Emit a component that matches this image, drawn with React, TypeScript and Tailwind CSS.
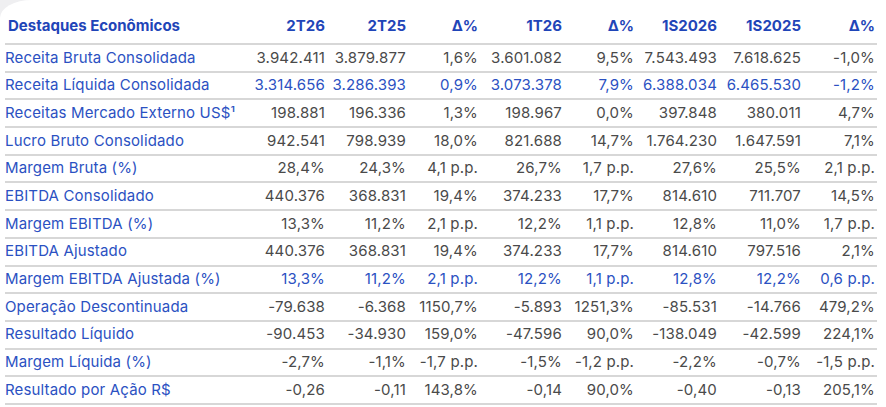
const cols = "grid grid-cols-[243px_79px_81px_72px_84px_72px_83px_84px_74px]";

const headers = ["2T26", "2T25", "Δ%", "1T26", "Δ%", "1S2026", "1S2025", "Δ%"];

type Row = { label: string; values: string[]; blue?: boolean };

const rows: Row[] = [
  { label: "Receita Bruta Consolidada", values: ["3.942.411", "3.879.877", "1,6%", "3.601.082", "9,5%", "7.543.493", "7.618.625", "-1,0%"] },
  { label: "Receita Líquida Consolidada", values: ["3.314.656", "3.286.393", "0,9%", "3.073.378", "7,9%", "6.388.034", "6.465.530", "-1,2%"], blue: true },
  { label: "Receitas Mercado Externo US$¹", values: ["198.881", "196.336", "1,3%", "198.967", "0,0%", "397.848", "380.011", "4,7%"] },
  { label: "Lucro Bruto Consolidado", values: ["942.541", "798.939", "18,0%", "821.688", "14,7%", "1.764.230", "1.647.591", "7,1%"] },
  { label: "Margem Bruta (%)", values: ["28,4%", "24,3%", "4,1 p.p.", "26,7%", "1,7 p.p.", "27,6%", "25,5%", "2,1 p.p."] },
  { label: "EBITDA Consolidado", values: ["440.376", "368.831", "19,4%", "374.233", "17,7%", "814.610", "711.707", "14,5%"] },
  { label: "Margem EBITDA (%)", values: ["13,3%", "11,2%", "2,1 p.p.", "12,2%", "1,1 p.p.", "12,8%", "11,0%", "1,7 p.p."] },
  { label: "EBITDA Ajustado", values: ["440.376", "368.831", "19,4%", "374.233", "17,7%", "814.610", "797.516", "2,1%"] },
  { label: "Margem EBITDA Ajustada (%)", values: ["13,3%", "11,2%", "2,1 p.p.", "12,2%", "1,1 p.p.", "12,8%", "12,2%", "0,6 p.p."], blue: true },
  { label: "Operação Descontinuada", values: ["-79.638", "-6.368", "1150,7%", "-5.893", "1251,3%", "-85.531", "-14.766", "479,2%"] },
  { label: "Resultado Líquido", values: ["-90.453", "-34.930", "159,0%", "-47.596", "90,0%", "-138.049", "-42.599", "224,1%"] },
  { label: "Margem Líquida (%)", values: ["-2,7%", "-1,1%", "-1,7 p.p.", "-1,5%", "-1,2 p.p.", "-2,2%", "-0,7%", "-1,5 p.p."] },
  { label: "Resultado por Ação R$", values: ["-0,26", "-0,11", "143,8%", "-0,14", "90,0%", "-0,40", "-0,13", "205,1%"] },
];

export default function App() {
  return (
    <div className="w-[886px] h-[407px] bg-[#efeff1] overflow-hidden font-['Inter',sans-serif]">
      <div className="w-full h-full bg-white rounded-tl-[32px_18px] pl-[5px] pr-[9px]">
        <div className={`${cols} h-[45px] items-center pt-[10px] border-b-2 border-[#d7d7d7] text-[15px] font-bold text-[#1f45b8]`}>
          <div className="pl-[3px] whitespace-nowrap">Destaques Econômicos</div>
          {headers.map((h, i) => (
            <div key={i} className="text-right pr-[2px]">
              {h}
            </div>
          ))}
        </div>

        {rows.map((row) => (
          <div
            key={row.label}
            className={`${cols} h-[27.7px] items-center border-b-2 border-[#d7d7d7] text-[15px] tracking-[0.15px]`}
          >
            <div className="text-[#2b51c2] whitespace-nowrap">{row.label}</div>
            {row.values.map((v, i) => (
              <div
                key={i}
                className={`text-right pr-[2px] whitespace-nowrap ${row.blue ? "text-[#2b51c2]" : "text-[#4a4a4a]"}`}
              >
                {v}
              </div>
            ))}
          </div>
        ))}
      </div>
    </div>
  );
}
